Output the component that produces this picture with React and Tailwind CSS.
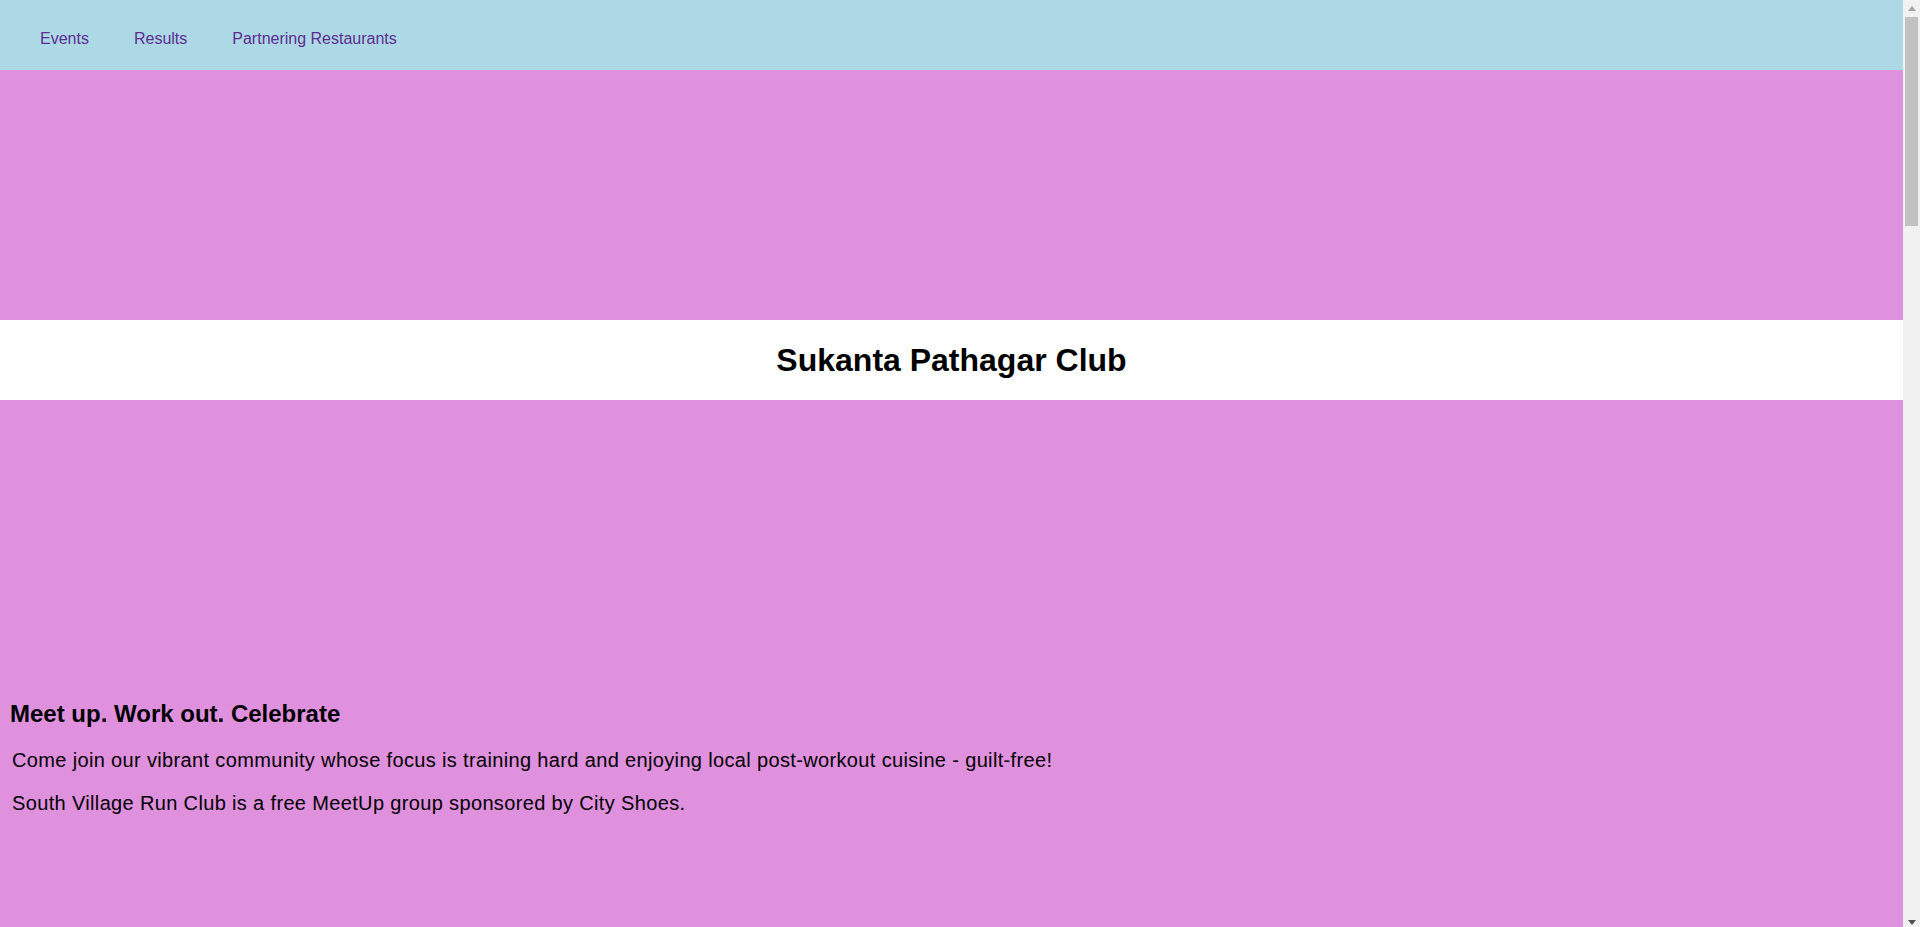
import React from 'react';

const links = ['Events', 'Results', 'Partnering Restaurants'];

// stand-in for the browser's vertical scrollbar seen in the shot
const ScrollBar = () => (
    <aside className="w-[17px] shrink-0 h-full bg-[#f1f1f1] flex flex-col">
        <div className="h-[17px] flex items-center justify-center">
            <svg width="8" height="5" viewBox="0 0 8 5"><path d="M0 5 L4 0 L8 5 Z" fill="#a3a3a3" /></svg>
        </div>
        <div className="h-[209px] px-[2px]">
            <div className="h-full bg-[#c1c1c1]" />
        </div>
        <div className="flex-1" />
        <div className="h-[17px] flex items-end justify-center pb-[2px]">
            <svg width="8" height="5" viewBox="0 0 8 5"><path d="M0 0 L8 0 L4 5 Z" fill="#505050" /></svg>
        </div>
    </aside>
);

const App = () => {
    return (
        <div className="h-[927px] flex overflow-hidden font-['Liberation_Sans',Arial,sans-serif] text-black">
            <main className="flex-1 bg-[#df91dd]">
                {/* top nav */}
                <nav className="h-[70px] bg-[#add8e6] pt-[27px] pl-[40px]">
                    <ul className="flex gap-[45px]">
                        {links.map(link => (
                            <li key={link}>
                                <a href="#" className="text-[16px] leading-[18.4px] text-[#5c2d91]">{link}</a>
                            </li>
                        ))}
                    </ul>
                </nav>

                {/* hero image placeholder */}
                <div className="h-[250px]" />

                <header className="h-[80px] bg-white flex items-center justify-center">
                    <h1 className="text-[32px] leading-[36.8px] font-bold">Sukanta Pathagar Club</h1>
                </header>

                <section className="pt-[300px]">
                    <h2 className="pl-[10px] text-[24px] leading-[27.6px] font-bold">Meet up. Work out. Celebrate</h2>
                    <p className="mt-[21px] pl-[12px] text-[20px] leading-[23px] tracking-[0.35px]">
                        Come join our vibrant community whose focus is training hard and enjoying local post-workout cuisine - guilt-free!
                    </p>
                    <p className="mt-[20px] pl-[12px] text-[20px] leading-[23px] tracking-[0.35px]">
                        South Village Run Club is a free MeetUp group sponsored by City Shoes.
                    </p>
                </section>
            </main>
            <ScrollBar />
        </div>
    );
};

export default App;
